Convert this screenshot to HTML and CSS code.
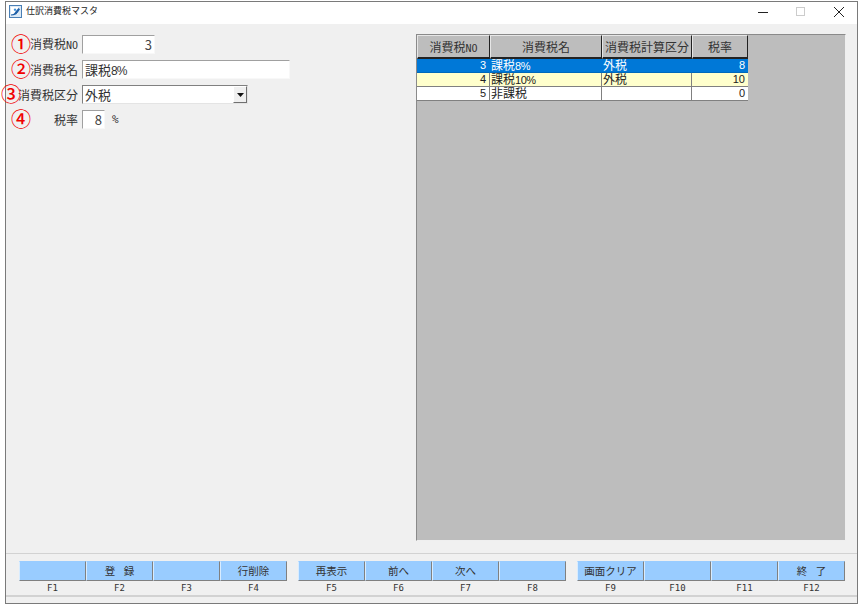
FILE: index.html
```html
<!DOCTYPE html>
<html lang="ja">
<head>
<meta charset="utf-8">
<title>仕訳消費税マスタ</title>
<link rel="stylesheet" href="styles.css">
</head>
<body>
<div class="window">
  <header class="titlebar">
    <svg class="app-icon" width="13" height="13" viewBox="0 0 13 13"><rect x="0.5" y="0.5" width="12" height="12" fill="#dbe9f6" stroke="#4a7fb5"/><rect x="2" y="2" width="7" height="7" fill="#fff"/><path d="M2 9.500c2.500 0 3.500-1 4.500-3L9.500 3l1.500 1.200-2.500 3.800c-1 1.500-3 2.500-6.500 2.500z" fill="#1d5fa8"/><path d="M6 3.500a1.200 1.200 0 1 0 .01 0z" fill="#3f8fd6"/></svg>
    <span class="title">仕訳消費税マスタ</span>
    <div class="controls">
      <svg class="ctl" width="12" height="12" viewBox="0 0 12 12"><path d="M1 6.500h10" stroke="#222"/></svg>
      <svg class="ctl" width="12" height="12" viewBox="0 0 12 12"><rect x="1.500" y="1.500" width="8" height="8" fill="none" stroke="#ccc"/></svg>
      <svg class="ctl" width="12" height="12" viewBox="0 0 12 12"><path d="M1 1l10 10M11 1L1 11" stroke="#222"/></svg>
    </div>
  </header>
  <main class="content">
    <section class="form">
      <div class="row">
        <span class="mark mark-a">①</span>
        <label class="label">消費税<span class="lat">NO</span></label>
        <div class="field w-no num">3</div>
      </div>
      <div class="row">
        <span class="mark mark-a">②</span>
        <label class="label">消費税名</label>
        <div class="field w-name">課税<span class="lat-lg">8%</span></div>
      </div>
      <div class="row">
        <span class="mark mark-c">③</span>
        <label class="label">消費税区分</label>
        <div class="field w-sel">外税<span class="drop"><svg width="7" height="4" viewBox="0 0 7 4"><path d="M0 0h7L3.500 4z" fill="#111"/></svg></span></div>
      </div>
      <div class="row">
        <span class="mark mark-a">④</span>
        <label class="label">税率</label>
        <div class="field w-rate num">8</div>
        <span class="pct">%</span>
      </div>
    </section>
    <section class="gridpanel">
      <div class="grow ghead">
        <div class="c c1">消費税<span class="lat">NO</span></div>
        <div class="c c2">消費税名</div>
        <div class="c c3">消費税計算区分</div>
        <div class="c c4">税率</div>
      </div>
      <div class="grow gsel">
        <div class="c c1 r">3</div>
        <div class="c c2">課税<span class="lat-sm">8%</span></div>
        <div class="c c3">外税</div>
        <div class="c c4 r">8</div>
      </div>
      <div class="grow gyel">
        <div class="c c1 r">4</div>
        <div class="c c2">課税<span class="lat-sm">10%</span></div>
        <div class="c c3">外税</div>
        <div class="c c4 r">10</div>
      </div>
      <div class="grow gwht">
        <div class="c c1 r">5</div>
        <div class="c c2">非課税</div>
        <div class="c c3"></div>
        <div class="c c4 r">0</div>
      </div>
    </section>
  </main>
  <footer class="fbar">
    <div class="fkeys">
      <div class="fgroup">
        <div class="fk"><button class="btn"></button><span class="fl">F1</span></div>
        <div class="fk"><button class="btn">登 録</button><span class="fl">F2</span></div>
        <div class="fk"><button class="btn"></button><span class="fl">F3</span></div>
        <div class="fk"><button class="btn">行削除</button><span class="fl">F4</span></div>
      </div>
      <div class="fgroup">
        <div class="fk"><button class="btn">再表示</button><span class="fl">F5</span></div>
        <div class="fk"><button class="btn">前へ</button><span class="fl">F6</span></div>
        <div class="fk"><button class="btn">次へ</button><span class="fl">F7</span></div>
        <div class="fk"><button class="btn"></button><span class="fl">F8</span></div>
      </div>
      <div class="fgroup">
        <div class="fk"><button class="btn">画面クリア</button><span class="fl">F9</span></div>
        <div class="fk"><button class="btn"></button><span class="fl">F10</span></div>
        <div class="fk"><button class="btn"></button><span class="fl">F11</span></div>
        <div class="fk"><button class="btn">終 了</button><span class="fl">F12</span></div>
      </div>
    </div>
  </footer>
</div>
</body>
</html>
```
FILE: styles.css
```css
* { box-sizing: border-box; }
html, body { margin: 0; padding: 0; background: #fff; }
body {
  width: 860px;
  height: 605px;
  padding: 1px 2px 1px 5px;
  font-family: "Noto Sans CJK JP", "Liberation Sans", sans-serif;
  font-size: 12px;
  color: #222;
  overflow: hidden;
}
.lat { font-family: "DejaVu Sans Mono", monospace; font-size: 10px; }
.lat-sm { font-family: "Liberation Sans", sans-serif; font-size: 11px; letter-spacing: -0.5px; }
.lat-lg { font-family: "Liberation Sans", sans-serif; font-size: 12px; letter-spacing: -1px; }
.window {
  width: 853px;
  height: 603px;
  border: 1px solid #7a7a7a;
  background: #f0f0f0;
  display: flex;
  flex-direction: column;
}
.titlebar {
  height: 22px;
  flex: none;
  background: #fff;
  display: flex;
  align-items: center;
  padding: 0 0 2px 3px;
}
.app-icon { flex: none; margin-bottom: 2px; }
.title { margin: 0 0 2px 4px; font-size: 9px; line-height: 18px; color: #222; }
.controls { margin-left: auto; display: flex; gap: 26px; padding-right: 12px; }
.ctl { display: block; }

.content {
  flex: 1;
  min-height: 0;
  display: flex;
  justify-content: space-between;
  padding: 10px 11px 12px 0;
}
.form { display: flex; flex-direction: column; gap: 6px; padding-top: 1px; }
.row { position: relative; display: flex; align-items: center; height: 19px; }
.label { width: 72px; text-align: right; line-height: 19px; margin-right: 4px; white-space: nowrap; color: #333; font-size: 12px; }
.mark { position: absolute; top: -4px; color: #f00000; font-size: 20px; line-height: 26px; font-weight: 500; }
.mark-a { left: 5px; }
.mark-c { left: -5px; }
.field {
  position: relative;
  height: 19px;
  background: #fff;
  border: 1px solid;
  border-color: #a0a0a0 #f8f8f8 #f8f8f8 #a0a0a0;
  padding: 0 2px;
  font-size: 13px;
  line-height: 17px;
  color: #333;
}
.num { text-align: right; padding-right: 2px; color: #444; }
.w-no { width: 73px; }
.w-name { width: 208px; }
.w-sel { width: 166px; border-color: #808080 #e4e4e4 #e4e4e4 #808080; }
.w-rate { width: 23px; }
.pct { margin-left: 7px; font-family: "DejaVu Sans Mono", monospace; font-size: 11px; color: #333; }
.drop {
  position: absolute;
  right: 0;
  top: 0;
  width: 14px;
  height: 17px;
  background: #f0f0f0;
  border: 1px solid;
  border-color: #fff #707070 #707070 #fff;
  display: flex;
  align-items: center;
  justify-content: center;
}

.gridpanel {
  width: 430px;
  background: #bdbdbd;
  border: 1px solid;
  border-color: #8a8a8a #efefef #efefef #8a8a8a;
}
.grow { display: flex; width: 331px; height: 14px; border-right: 1px solid #808080; }
.c {
  flex: none;
  padding: 0 1px;
  font-size: 12px;
  line-height: 12px;
  white-space: nowrap;
  border-right: 1px solid #808080;
  border-bottom: 1px solid #808080;
}
.c1 { width: 73px; }
.c2 { width: 112px; }
.c3 { width: 90px; }
.c4 { width: 56px; border-right: 0; }
.r { text-align: right; font-family: "Liberation Sans", sans-serif; font-size: 11px; padding-right: 3px; }
.ghead { height: 24px; }
.ghead .c {
  background: #bdbdbd;
  text-align: center;
  line-height: 21px;
  color: #333;
  border-top: 1px solid #e6e6e6;
  border-left: 1px solid #e6e6e6;
  border-right: 1px solid #222;
  border-bottom: 2px solid #222;
  padding: 0;
}
.ghead .c4 { border-right: 1px solid #222; }
.gsel .c { background: #0078d7; color: #fff; border-color: #0078d7; border-bottom-color: #0068bb; }
.gyel .c { background: #ffffcc; color: #222; }
.gwht .c { background: #fff; color: #222; }

.fbar {
  flex: none;
  height: 50px;
  display: flex;
  flex-direction: column;
}
.fkeys {
  height: 44px;
  border-top: 1px solid #d2d2d2;
  border-bottom: 2px solid #d2d2d2;
  padding: 7px 0 0 13px;
  display: flex;
  gap: 11px;
}
.fgroup { display: flex; }
.fk { width: 67px; display: flex; flex-direction: column; align-items: stretch; }
.btn {
  height: 20px;
  padding: 0;
  margin: 0;
  background: #99ccff;
  border: 1px solid;
  border-color: #d8ecff #808080 #808080 #d8ecff;
  border-top-color: #99ccff;
  font-family: inherit;
  font-size: 10.500px;
  line-height: 18px;
  color: #333;
  word-spacing: 6px;
}
.fl {
  text-align: center;
  font-family: "DejaVu Sans Mono", monospace;
  font-size: 9px;
  line-height: 13px;
  margin-top: 1px;
  color: #333;
}
```
